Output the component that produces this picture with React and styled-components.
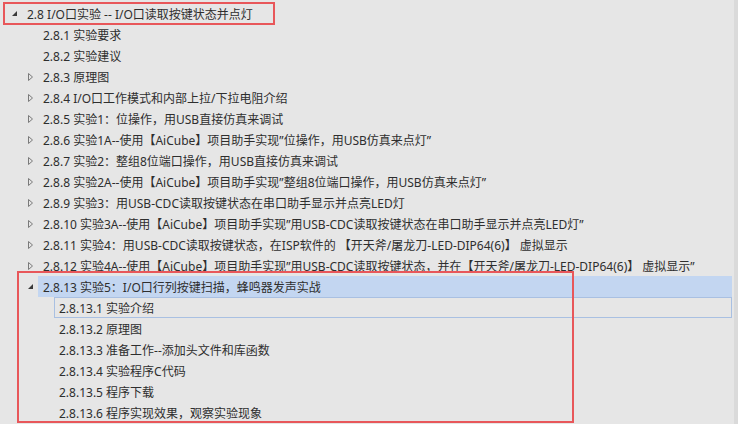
import React from 'react';
import styled, { createGlobalStyle } from 'styled-components';

const GlobalStyle = createGlobalStyle`
  html, body {
    margin: 0;
    padding: 0;
    background: #e6e6e6;
  }
`;

const Page = styled.div`
  position: relative;
  width: 738px;
  height: 424px;
  display: flex;
  overflow: hidden;
  background: #e6e6e6;
  font-family: "Noto Sans", "Noto Sans CJK SC", sans-serif;
  font-size: 12px;
  color: #2e2e2e;
`;

const Tree = styled.ul`
  flex: 1;
  list-style: none;
  margin: 0;
  padding: 3px 0 0 0;
`;

const Edge = styled.div`
  width: 4px;
  background: #dadada;
`;

const Row = styled.li`
  height: 21px;
  display: flex;
  align-items: center;
  padding-left: ${(p) => 11 + p.level * 16}px;
  padding-right: 2px;
`;

const Toggle = styled.span`
  width: 11px;
  flex: none;
  display: flex;
  align-items: center;
`;

const Label = styled.span`
  flex: 1;
  height: 19px;
  display: flex;
  align-items: center;
  padding-left: 4px;
  border: 1px solid ${(p) => (p.focused ? '#a9c0e2' : 'transparent')};
  background: ${(p) => (p.selected ? '#c3d6f1' : 'transparent')};
  white-space: nowrap;
`;

const Mark = styled.div`
  position: absolute;
  border: 2px solid #e8575a;
  pointer-events: none;
`;

function Arrow({ open }) {
  if (open) {
    return (
      <svg width="7" height="7" viewBox="0 0 7 7">
        <path d="M6 1 L6 6 L1 6 Z" fill="#3a3a3a" />
      </svg>
    );
  }
  return (
    <svg width="7" height="10" viewBox="0 0 7 10">
      <path d="M1.5 1.5 L5.5 5 L1.5 8.5 Z" fill="none" stroke="#7a7a7a" strokeWidth="1" />
    </svg>
  );
}

const items = [
  { level: 0, open: true, text: '2.8 I/O口实验 -- I/O口读取按键状态并点灯' },
  { level: 1, text: '2.8.1 实验要求' },
  { level: 1, text: '2.8.2 实验建议' },
  { level: 1, open: false, text: '2.8.3 原理图' },
  { level: 1, open: false, text: '2.8.4 I/O口工作模式和内部上拉/下拉电阻介绍' },
  { level: 1, open: false, text: '2.8.5 实验1：位操作，用USB直接仿真来调试' },
  { level: 1, open: false, text: '2.8.6 实验1A--使用【AiCube】项目助手实现”位操作，用USB仿真来点灯”' },
  { level: 1, open: false, text: '2.8.7 实验2：整组8位端口操作，用USB直接仿真来调试' },
  { level: 1, open: false, text: '2.8.8 实验2A--使用【AiCube】项目助手实现”整组8位端口操作，用USB仿真来点灯”' },
  { level: 1, open: false, text: '2.8.9 实验3：用USB-CDC读取按键状态在串口助手显示并点亮LED灯' },
  { level: 1, open: false, text: '2.8.10 实验3A--使用【AiCube】项目助手实现”用USB-CDC读取按键状态在串口助手显示并点亮LED灯”' },
  { level: 1, open: false, text: '2.8.11 实验4：用USB-CDC读取按键状态，在ISP软件的 【开天斧/屠龙刀-LED-DIP64(6)】 虚拟显示' },
  { level: 1, open: false, text: '2.8.12 实验4A--使用【AiCube】项目助手实现”用USB-CDC读取按键状态，并在【开天斧/屠龙刀-LED-DIP64(6)】 虚拟显示”' },
  { level: 1, open: true, selected: true, text: '2.8.13 实验5：I/O口行列按键扫描，蜂鸣器发声实战' },
  { level: 2, focused: true, text: '2.8.13.1 实验介绍' },
  { level: 2, text: '2.8.13.2 原理图' },
  { level: 2, text: '2.8.13.3 准备工作--添加头文件和库函数' },
  { level: 2, text: '2.8.13.4 实验程序C代码' },
  { level: 2, text: '2.8.13.5 程序下载' },
  { level: 2, text: '2.8.13.6 程序实现效果，观察实验现象' },
];

export default function App() {
  return (
    <Page>
      <GlobalStyle />
      <Tree>
        {items.map((it, i) => (
          <Row key={i} level={it.level}>
            <Toggle>{it.open !== undefined && <Arrow open={it.open} />}</Toggle>
            <Label selected={it.selected} focused={it.focused}>{it.text}</Label>
          </Row>
        ))}
      </Tree>
      <Edge />
      {/* annotation boxes drawn over the tree */}
      <Mark style={{ left: 3, top: 2, width: 268, height: 19 }} />
      <Mark style={{ left: 17, top: 271, width: 553, height: 148 }} />
    </Page>
  );
}
